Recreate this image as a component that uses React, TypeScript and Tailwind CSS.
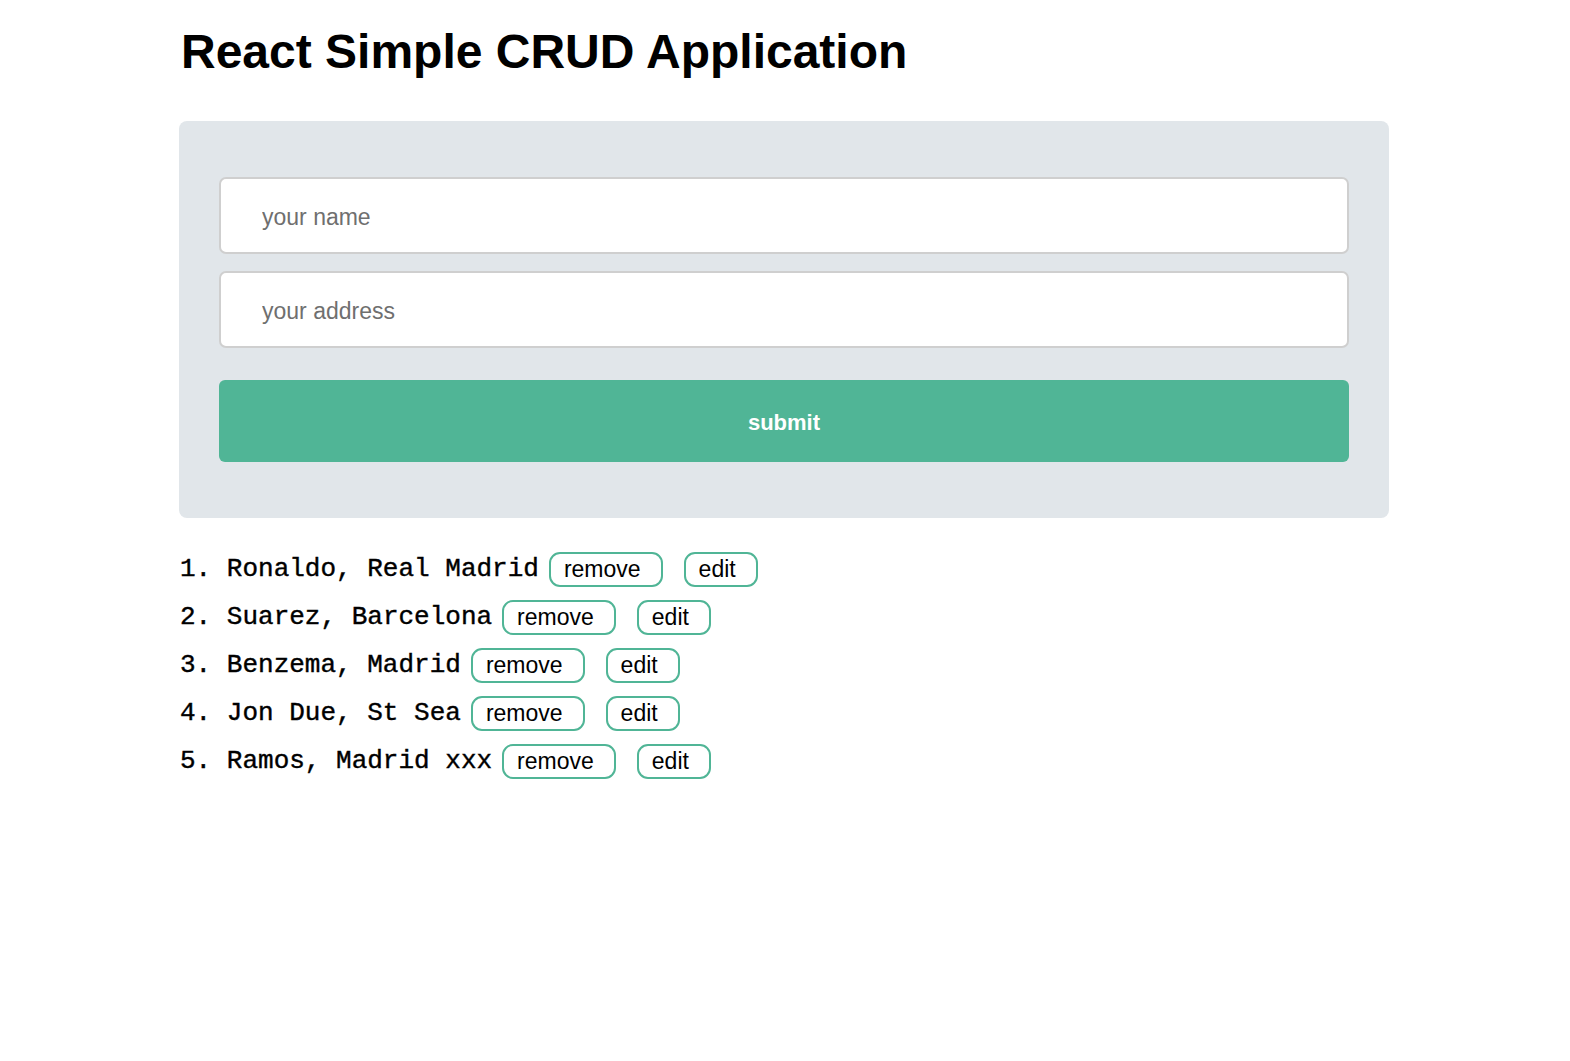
import { useState } from "react";

type Person = { id: number; name: string; address: string };

const PEOPLE: Person[] = [
  { id: 1, name: "Ronaldo", address: "Real Madrid" },
  { id: 2, name: "Suarez", address: "Barcelona" },
  { id: 3, name: "Benzema", address: "Madrid" },
  { id: 4, name: "Jon Due", address: "St Sea" },
  { id: 5, name: "Ramos", address: "Madrid xxx" },
];

const SANS = "font-['Liberation_Sans',Arial,sans-serif]";

function PillButton({ children, onClick }: { children: string; onClick?: () => void }) {
  return (
    <button
      onClick={onClick}
      className={`${SANS} h-[35px] rounded-[11px] border-2 border-[#50b596] bg-white pl-[13px] pr-[20px] text-[23px] leading-none text-black`}
    >
      {children}
    </button>
  );
}

function PersonRow({ p, index, onRemove }: { p: Person; index: number; onRemove: () => void }) {
  return (
    <li className="flex h-12 items-center">
      <span className="pl-px font-['Liberation_Mono','Courier_New',monospace] text-[26px] leading-none text-black [-webkit-text-stroke:0.4px_black]">
        {index + 1}. {p.name}, {p.address}
      </span>
      <span className="ml-[10px] flex gap-[21px]">
        <PillButton onClick={onRemove}>remove</PillButton>
        <PillButton>edit</PillButton>
      </span>
    </li>
  );
}

export default function App() {
  const [people, setPeople] = useState(PEOPLE);
  const [name, setName] = useState("");
  const [address, setAddress] = useState("");

  const submit = () => {
    if (!name.trim()) return;
    setPeople([...people, { id: Date.now(), name, address }]);
    setName("");
    setAddress("");
  };

  return (
    <div className="min-h-screen bg-white">
      <div className="ml-[179px] w-[1210px] pt-[24px]">
        <h1 className={`${SANS} pl-[2px] text-[48px] font-bold leading-[56px] text-black`}>
          React Simple CRUD Application
        </h1>

        <div className="mt-[41px] rounded-[8px] bg-[#e1e6ea] px-10 pb-[56px] pt-[56px]">
          <div className="flex flex-col gap-[17px]">
            <input
              value={name}
              onChange={(e) => setName(e.target.value)}
              placeholder="your name"
              className={`${SANS} h-[77px] w-full rounded-[7px] border-2 border-[#cfcfcf] bg-white px-[41px] pt-[3px] text-[23px] text-black outline-none placeholder:text-[#6f6f6f]`}
            />
            <input
              value={address}
              onChange={(e) => setAddress(e.target.value)}
              placeholder="your address"
              className={`${SANS} h-[77px] w-full rounded-[7px] border-2 border-[#cfcfcf] bg-white px-[41px] pt-[3px] text-[23px] text-black outline-none placeholder:text-[#6f6f6f]`}
            />
          </div>
          <button
            onClick={submit}
            className={`${SANS} mt-[32px] h-[82px] w-full rounded-[6px] bg-[#50b596] pt-[2px] text-[22px] font-semibold text-white`}
          >
            submit
          </button>
        </div>

        <ol className="mt-[27px]">
          {people.map((p, i) => (
            <PersonRow
              key={p.id}
              p={p}
              index={i}
              onRemove={() => setPeople(people.filter((x) => x.id !== p.id))}
            />
          ))}
        </ol>
      </div>
    </div>
  );
}
